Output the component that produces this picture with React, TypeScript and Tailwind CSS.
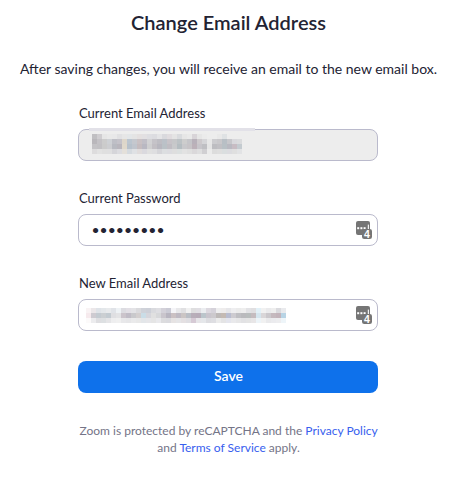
const CURRENT_EMAIL = [
  ['#c0bfc2', '#cfcdd0', '#e6e6e6', '#e9e9e9', '#e8e8e9', '#e1e1e3', '#e6e6e6', '#e3e6e8', '#e4e4e4', '#e4e0e0', '#e2e0e2', '#dedee2', '#dcdce0', '#e4e4e6', '#d9d9dd', '#e0dcdf', '#e4e4e4', '#d9dbde', '#e6e6e6', '#e9e9e9', '#d8d4d8', '#e6e6e6', '#ebebeb', '#ededed', '#ededed', '#e9e9e9', '#dfe2e4', '#ededed', '#ededed', '#ededed'],
  ['#b9b7bb', '#c4c2c6', '#cccccc', '#ced1d5', '#bebfc6', '#c4c2c9', '#ddd6ca', '#bbc5cf', '#c5c8ce', '#c9c1c4', '#c1bfc7', '#d2d2d4', '#c5c3c8', '#bebdc3', '#bbc1c8', '#c7c3c8', '#c6c7c9', '#bcc2c5', '#cdcdcd', '#c5c5c9', '#b8b1ba', '#cdc9cc', '#d5d5d8', '#e7e7e7', '#cccccf', '#c9c8cb', '#b8bfc5', '#c7c7cb', '#d8d8dc', '#dadbdd'],
  ['#c4c3c6', '#c2c1c4', '#cbcbcb', '#cdced1', '#b8bac1', '#b9b6bd', '#dfd8cb', '#b7c1cb', '#c0c5cd', '#c5bcbf', '#b9b8c2', '#cfcfd0', '#c2bfc4', '#b8b7bf', '#bac1c6', '#c0bdc3', '#c8c9cb', '#b5bdc1', '#c8c8cb', '#c7c4c7', '#bcb1b9', '#c7c5ca', '#bfbfc3', '#e5e5e5', '#bdbdc1', '#c1c0c4', '#b8c0c5', '#b9b9c1', '#c7bcc3', '#c4cbd0'],
  ['#dddcdd', '#e2e2e2', '#dfdfdf', '#dfdfe0', '#d5d5d9', '#dcdce0', '#e4e0da', '#d5dadf', '#dfe1e4', '#e0dcdc', '#dad9de', '#e0e0e0', '#dedee0', '#d5d5d9', '#dcdee0', '#dcdce0', '#dedede', '#dce0e0', '#e2e2e2', '#dfdfdf', '#dad8da', '#dededf', '#d0cfd2', '#ebebeb', '#dcdcdc', '#dedede', '#dadedf', '#dcdce0', '#dfdfdf', '#e2e3e5'],
];

const NEW_EMAIL = [
  ['#f9f3f4', '#ebe7e9', '#dfe3e8', '#e3e7ea', '#e8eaec', '#e0e3e8', '#eef2f5', '#dcdce1', '#e2dfe5', '#e3e3e6', '#dadadd', '#cfd2d9', '#cdd0d8', '#d9dade', '#dedee2', '#d3d1d9', '#cbcbd5', '#f5f5f8', '#e8e8ea', '#e0e0e2', '#f1f1f1', '#dededf', '#e0dee3', '#ebedf0', '#dcd8df', '#d5d2da', '#eeeeef', '#eeecec', '#e6e6e9', '#eeeef0', '#ebebeb', '#eeeeee', '#e2e2e5', '#e0dfe1', '#e2f0f7', '#f1f1f1', '#eaeaec', '#eeeeee', '#dadade', '#e9eaed'],
  ['#f6eaed', '#cecbd1', '#c4cbd1', '#cbcfd2', '#c3cbd1', '#dfdfe2', '#e3e3e5', '#cbc4cb', '#c0bcc6', '#c9c9cc', '#d3cfcf', '#cadde7', '#d6d6dc', '#e0e0e0', '#d7d8da', '#c9c5cc', '#b8b5c0', '#cbc1c3', '#bfbac3', '#cbc5c4', '#babec5', '#b8aeb9', '#b7acb8', '#bbc5cb', '#c9c5cd', '#ccc9cd', '#bdb9b8', '#c4bab3', '#b9bdd0', '#cdcbd0', '#bfbfc3', '#bababd', '#b9bdbd', '#c5bcbf', '#d5e5ee', '#d9d6d8', '#cbc8cc', '#c5b9be', '#c3b4bb', '#b8d4e5'],
  ['#fcfafa', '#ececee', '#dedee1', '#dde0e2', '#e5e5e7', '#eeeeef', '#f0f0f0', '#e8e8ea', '#e6e6e8', '#eaeaeb', '#e8e8e8', '#e3e6e9', '#e6e6e9', '#e5e5e5', '#e9e9ec', '#dcdcde', '#dadade', '#e6e3e3', '#e5e5e7', '#e4e0e2', '#dfdee2', '#d6cad5', '#e6e5e8', '#e5e7ea', '#dcdce0', '#dedee2', '#ebebeb', '#e4e4e5', '#e4e5ed', '#e9e9eb', '#e6e6e7', '#e2e2e4', '#e4e4e4', '#e8e6e7', '#edf4f8', '#f1f1f1', '#e9e9eb', '#ebebee', '#ededef', '#eef5f9'],
];

interface MosaicProps {
  rows: string[][];
}

// Hides a value behind 5px blocks
function Mosaic({ rows }: MosaicProps) {
  return (
    <div className="flex flex-col">
      {rows.map((row, r) => (
        <div key={r} className="flex h-[5px]">
          {row.map((color, c) => (
            <span key={c} className="w-[5px]" style={{ backgroundColor: color }} />
          ))}
        </div>
      ))}
    </div>
  );
}

// Password manager badge at the right end of a field
function ManagerIcon() {
  return (
    <svg width="16" height="18" viewBox="0 0 16 18" className="shrink-0">
      <rect x="0" y="0" width="14" height="14" rx="2" fill="#757575" />
      <g fill="#fff">
        <rect x="1.2" y="6.2" width="2" height="2" />
        <rect x="4.4" y="6.2" width="2" height="2" />
        <rect x="7.6" y="6.2" width="2" height="2" />
        <rect x="11.8" y="3.6" width="1.1" height="4.6" />
      </g>
      <rect x="6" y="8" width="10" height="10" rx="2.2" fill="#757575" />
      <text x="10.8" y="17" textAnchor="middle" fontFamily="Liberation Sans, sans-serif" fontSize="10.5" fontWeight="700" fill="#fff">
        4
      </text>
    </svg>
  );
}

export default function App() {
  return (
    <div className="flex h-[483px] w-[465px] flex-col bg-white font-['Lato',sans-serif] text-[#232333]">
      <h1 className="mt-[9px] w-[457px] text-center text-[20px] leading-[26px] font-semibold">Change Email Address</h1>
      <p className="mt-[24px] w-[457px] text-center text-[14px] leading-5">
        After saving changes, you will receive an email to the new email box.
      </p>
      <div className="ml-[78px] w-[300px]">
        <div className="mt-[24px] pl-px text-[13px] leading-5">Current Email Address</div>
        <div className="relative mt-[6px] h-8 rounded-[8px] border border-[#babacc] bg-[#ededed] pt-1 pl-[13px]">
          <div className="absolute -top-[2px] left-[10px] h-[3px] w-[166px] bg-[#e2e1e8]" />
          <Mosaic rows={CURRENT_EMAIL} />
        </div>
        <div className="mt-[27px] pl-px text-[13px] leading-5">Current Password</div>
        <div className="mt-[6px] flex h-8 items-center justify-between rounded-[8px] border border-[#babacc] pr-[5px] pl-[12.5px]">
          <span className="text-[14px] leading-5">•••••••••</span>
          <ManagerIcon />
        </div>
        <div className="mt-[27px] pl-px text-[13px] leading-5">New Email Address</div>
        <div className="mt-[6px] flex h-8 items-center justify-between rounded-[8px] border border-[#babacc] pr-[5px] pl-[7px]">
          <Mosaic rows={NEW_EMAIL} />
          <ManagerIcon />
        </div>
        <button className="mt-[30px] block h-8 w-full rounded-[8px] bg-[#0e71eb] pb-[3px] pl-px text-[14px] leading-5 font-semibold text-white">
          Save
        </button>
        <p className="mt-[29px] pl-px text-center text-[12px] leading-[17px] text-[#747487]">
          Zoom is protected by reCAPTCHA and the <a className="text-[#3860ee]">Privacy Policy</a> and{' '}
          <a className="text-[#3860ee]">Terms of Service</a> apply.
        </p>
      </div>
    </div>
  );
}
